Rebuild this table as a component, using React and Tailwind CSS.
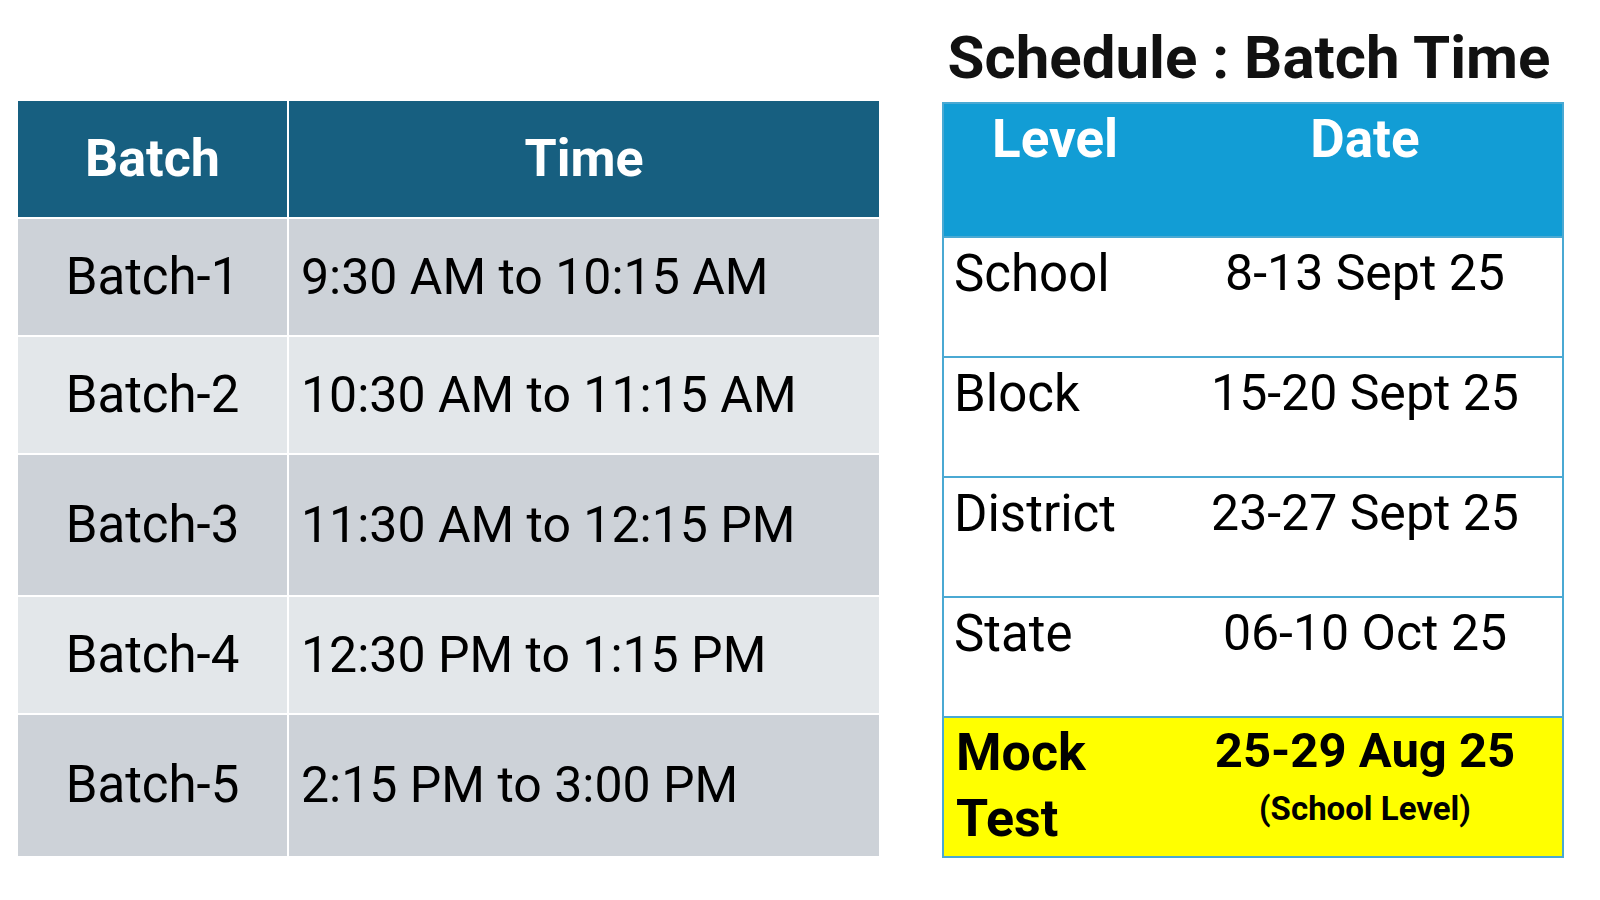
import React from "react";

const batches = [
  { name: "Batch-1", time: "9:30 AM to 10:15 AM", h: "h-[116px]", bg: "bg-[#cdd2d8]" },
  { name: "Batch-2", time: "10:30 AM to 11:15 AM", h: "h-[116px]", bg: "bg-[#e3e7ea]" },
  { name: "Batch-3", time: "11:30 AM to 12:15 PM", h: "h-[140px]", bg: "bg-[#cdd2d8]" },
  { name: "Batch-4", time: "12:30 PM to 1:15 PM", h: "h-[116px]", bg: "bg-[#e3e7ea]" },
  { name: "Batch-5", time: "2:15 PM to 3:00 PM", h: "h-[141px]", bg: "bg-[#cdd2d8]" },
];

const levels = [
  { level: "School", date: "8-13 Sept 25" },
  { level: "Block", date: "15-20 Sept 25" },
  { level: "District", date: "23-27 Sept 25" },
  { level: "State", date: "06-10 Oct 25" },
];

const BatchTable = () => {
  return (
    <div className="mt-[101px] w-[861px] grid grid-cols-[269px_590px] gap-x-[2px] gap-y-[2px] text-black">
      <div className="h-[116px] bg-[#175f80] flex items-center justify-center text-white font-bold text-[52px]">
        Batch
      </div>
      <div className="h-[116px] bg-[#175f80] flex items-center justify-center text-white font-bold text-[52px]">
        Time
      </div>
      {batches.map((b) => (
        <React.Fragment key={b.name}>
          <div className={`${b.h} ${b.bg} flex items-center justify-center text-[51px]`}>{b.name}</div>
          <div className={`${b.h} ${b.bg} flex items-center pl-[12px] text-[50px]`}>{b.time}</div>
        </React.Fragment>
      ))}
    </div>
  );
};

const LevelTable = () => {
  return (
    <div className="w-[622px] flex flex-col mt-[28px]">
      <h1 className="h-[59px] leading-none text-center pr-[8px] font-bold text-[60px] text-[#111]">Schedule : Batch Time</h1>
      <div className="mt-[15px] border-2 border-[#4aa9d3]">
        <div className="h-[132px] bg-[#129dd5] grid grid-cols-[224px_1fr] text-white font-bold text-[53px] leading-[1.2] pt-[4px]">
          <span className="pl-[48px]">Level</span>
          <span className="text-center">Date</span>
        </div>
        {levels.map((l) => (
          <div key={l.level} className="h-[120px] border-t-2 border-[#4aa9d3] grid grid-cols-[224px_1fr] leading-[1.2] pt-[5px]">
            <span className="pl-[10px] text-[51px]">{l.level}</span>
            <span className="text-center text-[50px]">{l.date}</span>
          </div>
        ))}
        <div className="h-[140px] border-t-2 border-[#4aa9d3] bg-[#ffff00] grid grid-cols-[224px_1fr] font-bold">
          <div className="pl-[12px] pt-[2px] text-[52px] leading-[66px]">
            Mock
            <br />
            Test
          </div>
          <div className="flex flex-col items-center pt-[4px]">
            <span className="text-[49px] leading-[1.2]">25-29 Aug 25</span>
            <span className="text-[33px] leading-[1.2] mt-[8px]">(School Level)</span>
          </div>
        </div>
      </div>
    </div>
  );
};

const App = () => {
  return (
    <div className="w-[1600px] h-[900px] bg-white flex items-start pl-[18px] font-['Roboto',sans-serif] text-black">
      <BatchTable />
      <div className="ml-[63px]">
        <LevelTable />
      </div>
    </div>
  );
};

export default App;
